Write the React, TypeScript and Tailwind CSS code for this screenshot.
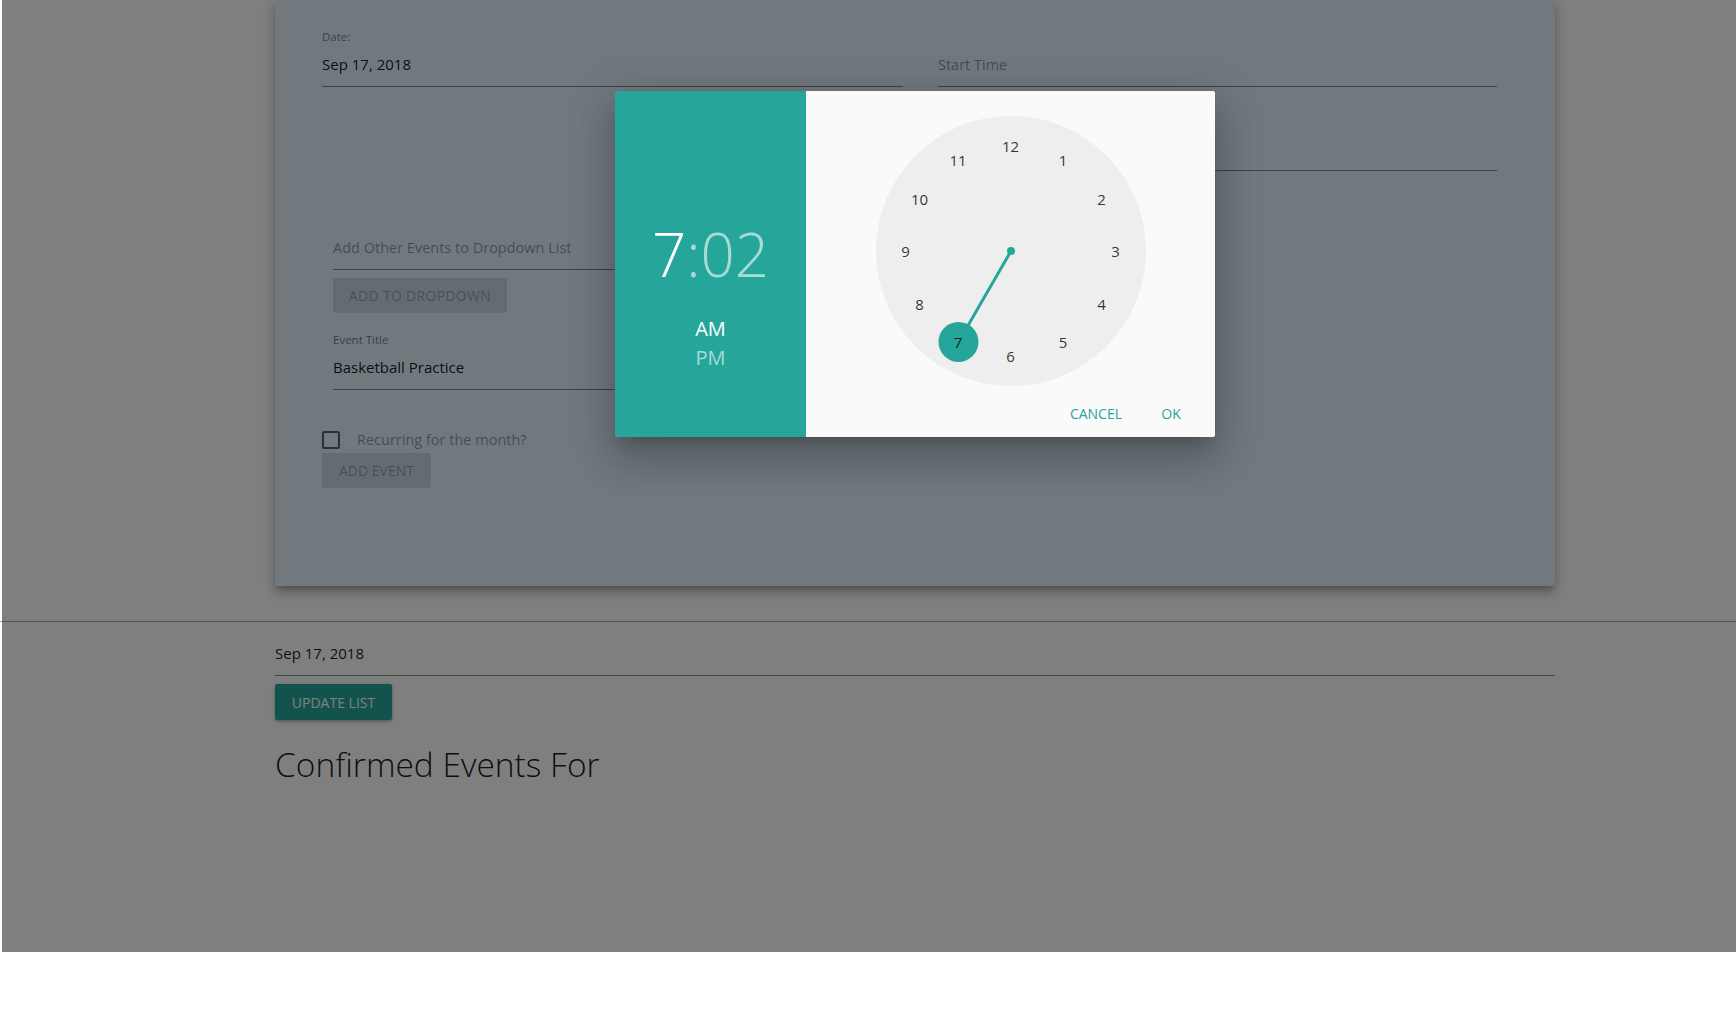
import React from "react";

const TEAL = "#26a69a";

function Field({
  label,
  value,
  placeholder,
  className = "",
}: {
  label?: string;
  value?: string;
  placeholder?: string;
  className?: string;
}) {
  return (
    <div className={className}>
      <div className="h-4 text-[11.5px] leading-4 text-black/50">{label}</div>
      <div className="h-[42px] pt-[10px] border-b border-black/45 leading-[19px]">
        {value ? (
          <span className="text-[15px] text-black/90">{value}</span>
        ) : (
          <span className="text-[14.5px] text-black/40">{placeholder}</span>
        )}
      </div>
    </div>
  );
}

function Clock() {
  const size = 270;
  const c = size / 2;
  const r = 105;
  const selected = 7;
  const pos = (n: number) => {
    const a = (n * 30 * Math.PI) / 180;
    return { x: c + r * Math.sin(a), y: c - r * Math.cos(a) };
  };
  const s = pos(selected);
  const hours = [12, 1, 2, 3, 4, 5, 6, 7, 8, 9, 10, 11];

  return (
    <div className="relative w-[270px] h-[270px] rounded-full bg-[#eeeeee]">
      <svg className="absolute inset-0" width={size} height={size} viewBox="0 0 270 270">
        <line x1={c} y1={c} x2={s.x} y2={s.y} stroke={TEAL} strokeWidth="3" />
        <circle cx={c} cy={c} r="4" fill={TEAL} />
        <circle cx={s.x} cy={s.y} r="20" fill={TEAL} />
      </svg>
      {hours.map((h) => {
        const p = pos(h);
        return (
          <span
            key={h}
            className="absolute -translate-x-1/2 -translate-y-1/2 text-[15px] leading-none text-black/80"
            style={{ left: p.x, top: p.y }}
          >
            {h}
          </span>
        );
      })}
    </div>
  );
}

function TimeDialog() {
  return (
    <div className="absolute left-[615px] top-[91px] w-[600px] h-[346px] flex rounded-[2px] overflow-hidden shadow-[0_11px_15px_-7px_rgba(0,0,0,0.2),0_24px_38px_3px_rgba(0,0,0,0.14),0_9px_46px_8px_rgba(0,0,0,0.12)]">
      <div className="w-[191px] bg-[#26a69a] flex flex-col items-center pt-[133px]">
        <div className="text-[60px] leading-[60px] font-light">
          <span className="text-white">7</span>
          <span className="text-white/60">:02</span>
        </div>
        <div className="mt-[30px] text-[20px] leading-[29px] font-medium text-white">AM</div>
        <div className="text-[20px] leading-[29px] text-white/60">PM</div>
      </div>
      <div className="flex-1 bg-[#fafafa] flex flex-col items-center pt-[25px]">
        <Clock />
        <div className="mt-[9px] self-stretch flex justify-end gap-[1px] pr-[12px]">
          <button className="h-9 min-w-16 px-4 text-[14px] uppercase text-[#26a69a]">Cancel</button>
          <button className="h-9 min-w-16 px-4 text-[14px] uppercase text-[#26a69a]">OK</button>
        </div>
      </div>
    </div>
  );
}

export default function App() {
  return (
    <div className="relative h-[952px] bg-white overflow-hidden font-['Open_Sans',sans-serif]">
      <div className="pl-[275px]">
        <div className="w-[1280px] h-[586px] bg-[#e3f2fd] rounded-b-[4px] shadow-[0_5px_5px_-3px_rgba(0,0,0,0.2),0_8px_10px_1px_rgba(0,0,0,0.14),0_3px_14px_2px_rgba(0,0,0,0.12)]">
          <div className="pt-[29px] pl-[47px] flex gap-x-[35px]">
            <div className="w-[581px]">
              <Field label="Date:" value="Sep 17, 2018" />
              <div className="mt-[141px] ml-[11px] w-[560px]">
                <div className="h-[42px] pt-[10px] border-b border-black/45 text-[14.5px] leading-[19px] text-black/40">
                  Add Other Events to Dropdown List
                </div>
                <button className="mt-[8px] h-[35px] w-[174px] rounded-[2px] bg-black/10 text-[14px] tracking-[0.3px] uppercase text-black/30">
                  Add to Dropdown
                </button>
                <Field className="mt-[19px]" label="Event Title" value="Basketball Practice" />
              </div>
              <label className="mt-[42px] flex items-center h-4">
                <span className="w-[18px] h-[18px] rounded-[2px] border-2 border-black/60" />
                <span className="ml-[17px] text-[14.5px] text-black/40">Recurring for the month?</span>
              </label>
              <button className="mt-[5px] h-[35px] w-[109px] rounded-[2px] bg-black/10 text-[14px] uppercase text-black/30">
                Add Event
              </button>
            </div>
            <div className="w-[559px]">
              <Field placeholder="Start Time" />
              <Field className="mt-[26px]" placeholder="End Time" />
            </div>
          </div>
        </div>
      </div>

      <hr className="mt-[35px] border-0 border-t border-[#aaaaaa]" />

      <div className="pl-[275px]">
        <div className="w-[1280px]">
          <div className="mt-[12px] h-[42px] pt-[10px] border-b border-black/45 text-[15px] leading-[19px] text-black/90">
            Sep 17, 2018
          </div>
          <button className="mt-[8px] h-9 w-[117px] rounded-[2px] bg-[#26a69a] text-[14px] font-medium uppercase text-white shadow-[0_1px_5px_rgba(0,0,0,0.2),0_2px_2px_rgba(0,0,0,0.14)]">
            Update List
          </button>
          <h2 className="mt-[24px] text-[33.5px] leading-[40px] font-light text-black/90">Confirmed Events For</h2>
        </div>
      </div>

      <div className="absolute inset-y-0 left-[2px] right-0 bg-black/50" />
      <TimeDialog />
    </div>
  );
}
